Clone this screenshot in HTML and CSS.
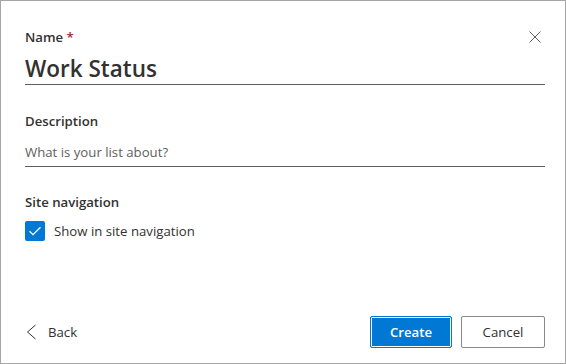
FILE: index.html
```html
<!DOCTYPE html>
<html lang="en">
<head>
<meta charset="utf-8">
<title>Create list</title>
<link rel="stylesheet" href="styles.css">
</head>
<body>
<div class="dialog">
  <div class="body">
    <div class="field field-name">
      <div class="label-row">
        <label class="label">Name <span class="req">*</span></label>
        <button class="close" aria-label="Close">
          <svg width="12" height="12" viewBox="0 0 12 12"><path d="M0.5 0.5 L11.5 11.5 M11.5 0.5 L0.5 11.5" stroke="#605e5c" stroke-width="1" fill="none"/></svg>
        </button>
      </div>
      <div class="input input-large">Work Status</div>
    </div>
    <div class="field field-desc">
      <label class="label">Description</label>
      <div class="input placeholder">What is your list about?</div>
    </div>
    <div class="field field-nav">
      <label class="label">Site navigation</label>
      <div class="check-row">
        <span class="checkbox">
          <svg width="20" height="20" viewBox="0 0 20 20"><path d="M4.5 10.2 L8 13.6 L15.5 6.2" stroke="#fff" stroke-width="1.3" fill="none"/></svg>
        </span>
        <span class="check-label">Show in site navigation</span>
      </div>
    </div>
  </div>
  <div class="footer">
    <button class="back">
      <svg width="12" height="16" viewBox="0 0 12 16"><path d="M10.5 1 L2.5 8 L10.5 15" stroke="#323130" stroke-width="1" fill="none"/></svg>
      <span>Back</span>
    </button>
    <div class="actions">
      <button class="btn btn-primary">Create</button>
      <button class="btn btn-default">Cancel</button>
    </div>
  </div>
</div>
</body>
</html>
```

FILE: styles.css
```css
* { box-sizing: border-box; }
html, body { margin: 0; padding: 0; background: #fff; }
body {
  font-family: "Segoe UI", "Open Sans", "Noto Sans", sans-serif;
  color: #323130;
  font-size: 13.2px;
}
.dialog {
  width: 566px;
  height: 364px;
  border: 1px solid #a6a6a6;
  display: flex;
  flex-direction: column;
  justify-content: space-between;
  padding: 26px 20px 15px 24px;
}
.body { display: flex; flex-direction: column; }
.label-row { display: flex; justify-content: space-between; align-items: center; }
.label {
  display: block;
  font-size: 13.2px;
  line-height: 20px;
  font-weight: 600;
  color: #323130;
}
.req { color: #a4262c; }
.close {
  width: 16px; height: 16px;
  padding: 0; margin: 0 2px 0 0;
  border: 0; background: none;
  display: flex; align-items: center; justify-content: center;
}
.close svg { display: block; }
.input {
  border-bottom: 1px solid #605e5c;
  font-size: 13.2px;
  line-height: 20px;
  padding-bottom: 4px;
}
.input-large {
  margin-top: 7px;
  font-size: 22.5px;
  line-height: 30px;
  font-weight: 600;
  padding-bottom: 0;
}
.placeholder { color: #605e5c; margin-top: 11px; }
.field-desc { margin-top: 26px; }
.field-nav { margin-top: 25px; }
.check-row { display: flex; align-items: center; gap: 9px; margin-top: 9px; }
.checkbox {
  width: 20px; height: 20px;
  background: #0078d4;
  border-radius: 2px;
  display: block;
}
.checkbox svg { display: block; }
.check-label { line-height: 20px; }
.footer { display: flex; justify-content: space-between; align-items: center; }
.back {
  display: flex; align-items: center; gap: 11px;
  border: 0; background: none; padding: 0;
  font: inherit; color: #323130;
  height: 32px;
}
.back svg { display: block; }
.actions { display: flex; gap: 9px; }
.btn {
  height: 32px;
  border-radius: 2px;
  font: inherit;
  font-size: 13.2px;
  padding: 0 12px;
}
.btn-primary {
  width: 82px;
  background: #0078d4;
  color: #fff;
  font-weight: 600;
  border: 1px solid #0078d4;
  box-shadow: inset 0 0 0 1px #fff;
}
.btn-default {
  width: 84px;
  background: #fff;
  color: #323130;
  font-weight: 400;
  border: 1px solid #8a8886;
}
```
